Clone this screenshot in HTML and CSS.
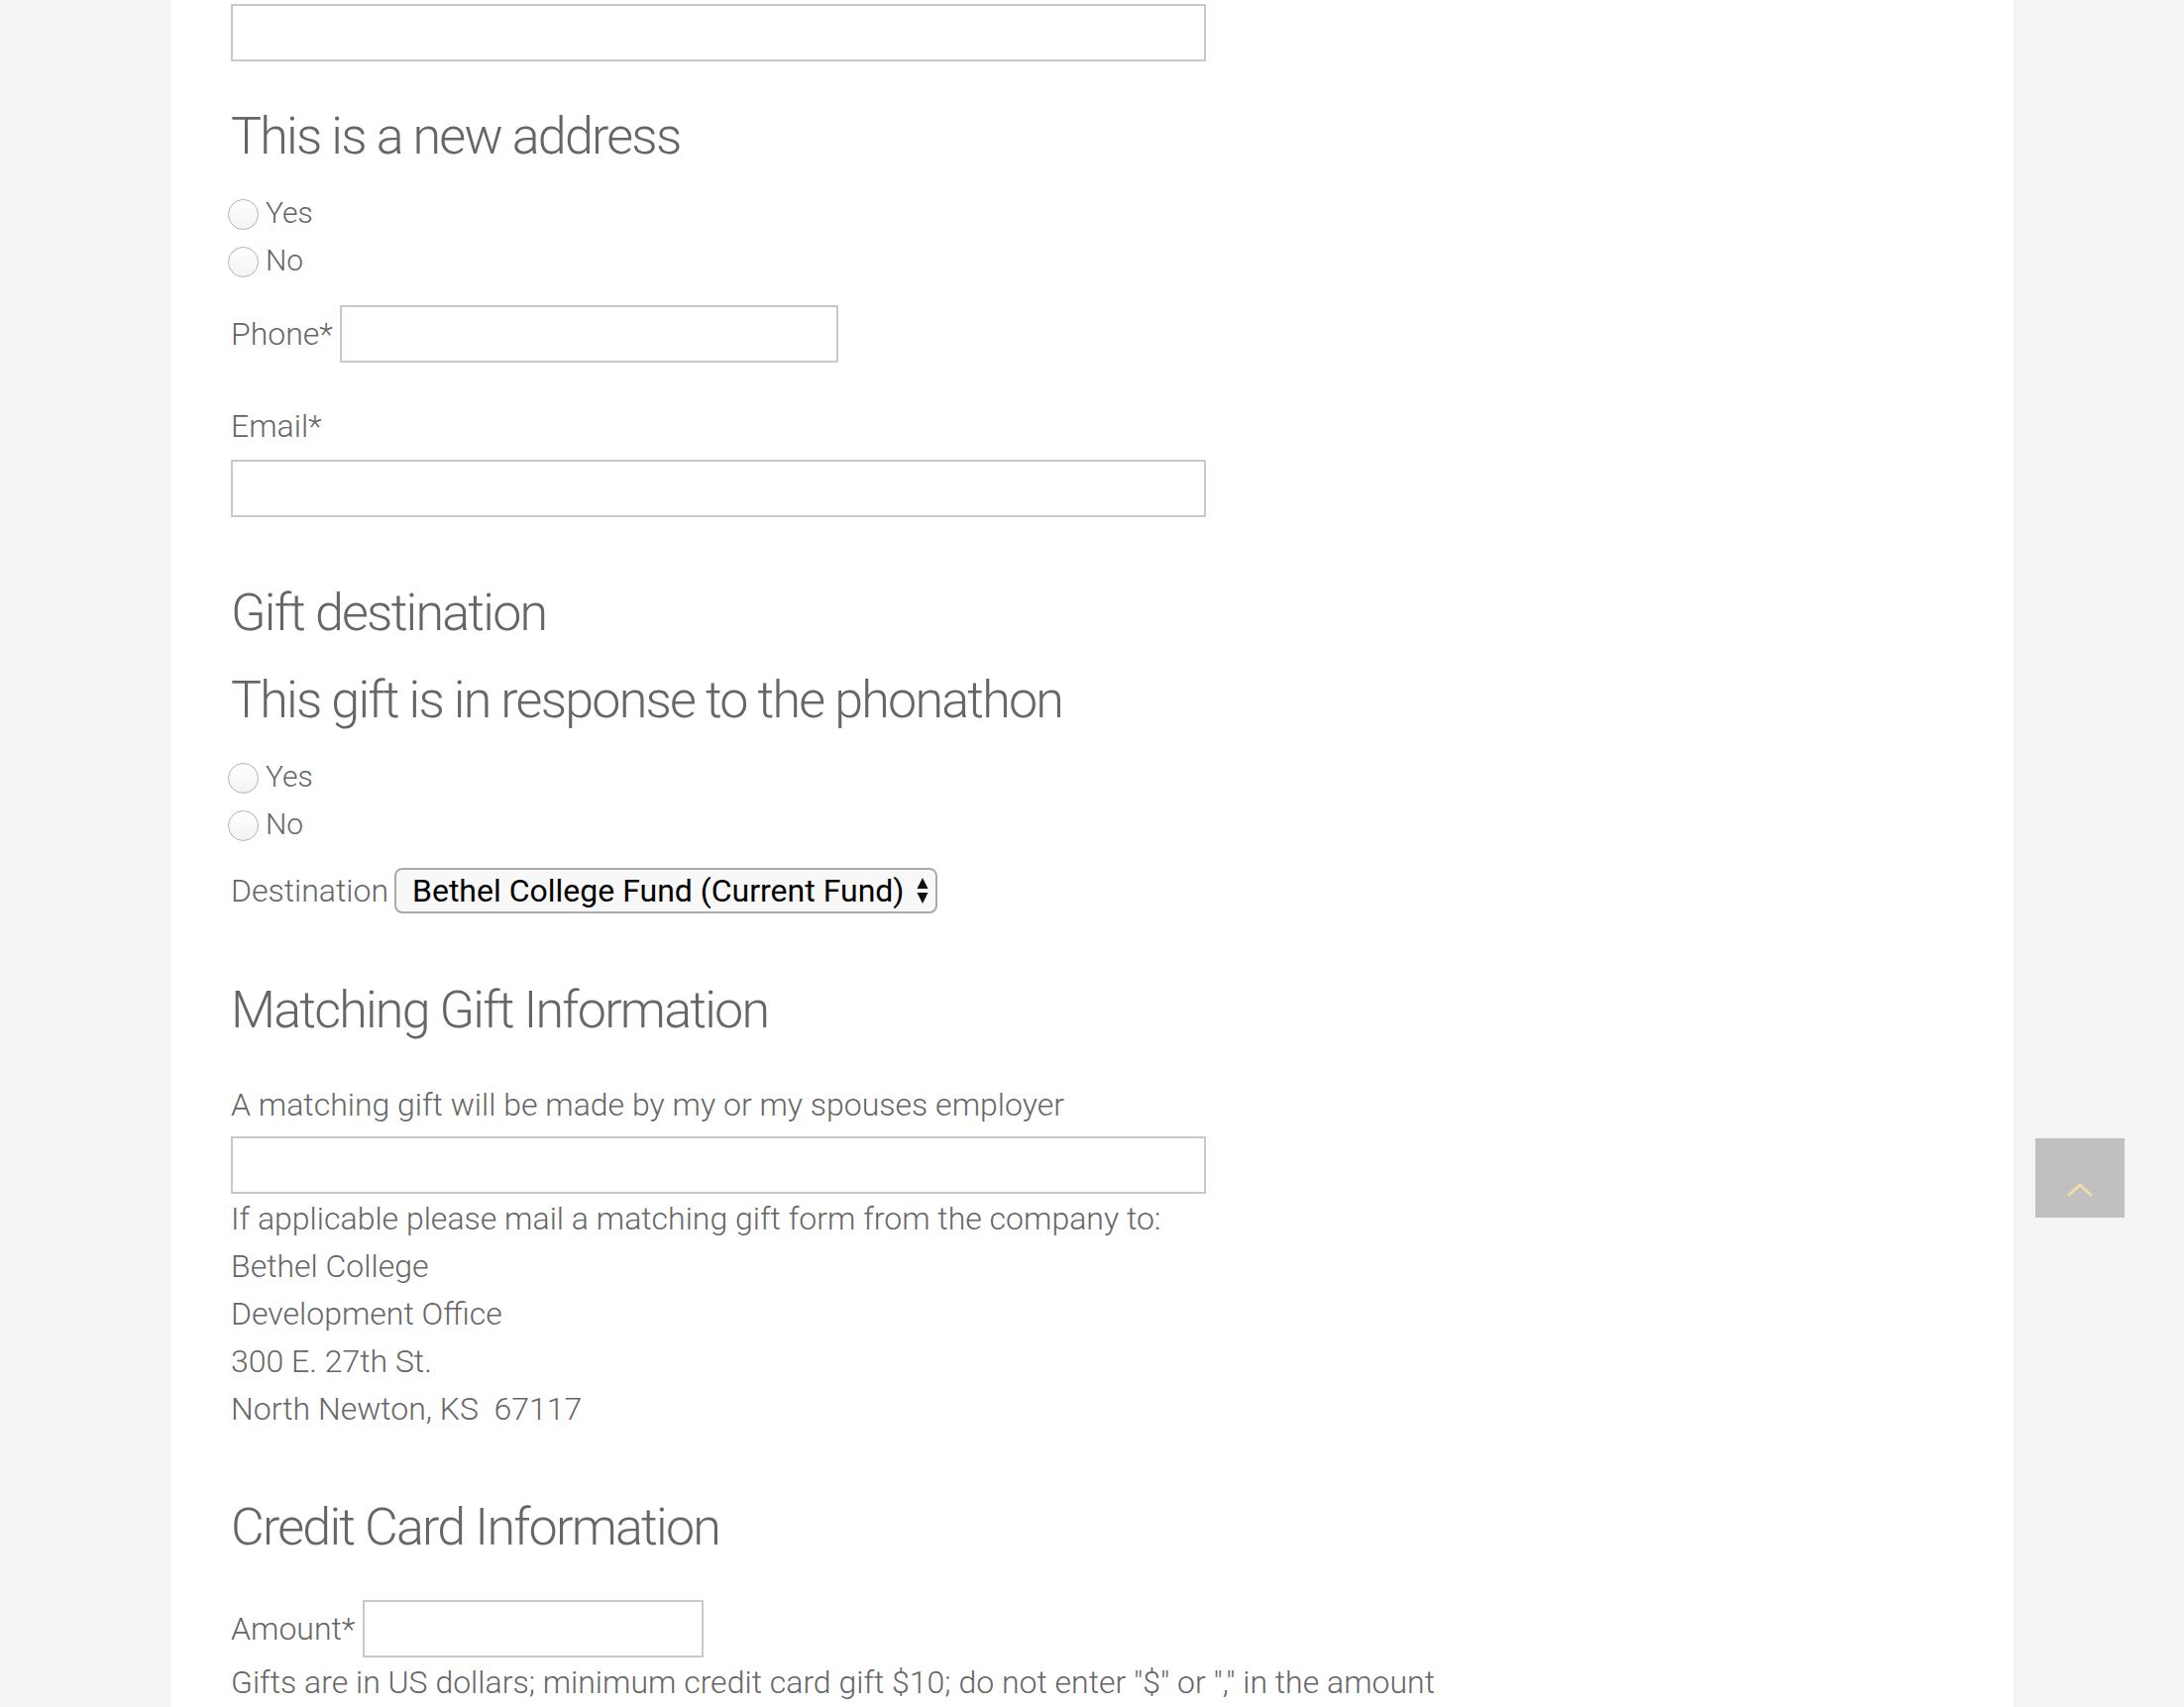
FILE: index.html
```html
<!DOCTYPE html>
<html>
<head>
    <title>Online Giving</title>
    <link rel="stylesheet" href="styles.css">
</head>
<body>
    <div class="page">
        <form class="gift-form">
            <input type="text" class="text-input wide" />

            <h3 class="section first">This is a new address</h3>
            <div class="choices">
                <label class="choice"><input type="radio" name="new-address" /> Yes</label>
                <label class="choice"><input type="radio" name="new-address" /> No</label>
            </div>

            <div class="inline-field">
                <label for="phone">Phone*</label>
                <input type="text" id="phone" class="text-input phone" />
            </div>

            <label class="block-label email-label" for="email">Email*</label>
            <input type="email" id="email" class="text-input wide" />

            <h3 class="section">Gift destination</h3>
            <h3 class="section">This gift is in response to the phonathon</h3>
            <div class="choices">
                <label class="choice"><input type="radio" name="phonathon" /> Yes</label>
                <label class="choice"><input type="radio" name="phonathon" /> No</label>
            </div>

            <div class="inline-field select-field">
                <label for="destination">Destination</label>
                <span class="select-wrap">
                    <select id="destination" class="select">
                        <option>Bethel College Fund (Current Fund)</option>
                    </select>
                    <svg class="select-arrows" width="12" height="28" viewBox="0 0 12 28">
                        <polygon points="6,1 11.5,12 0.5,12" fill="#111" />
                        <polygon points="0.5,16 11.5,16 6,27" fill="#111" />
                    </svg>
                </span>
            </div>

            <h3 class="section">Matching Gift Information</h3>
            <label class="block-label matching-label" for="employer">A matching gift will be made by my or my spouses employer</label>
            <input type="text" id="employer" class="text-input wide matching-input" />
            <div class="note">
                If applicable please mail a matching gift form from the company to:<br>
                Bethel College<br>
                Development Office<br>
                300 E. 27th St.<br>
                North Newton, KS&nbsp; 67117
            </div>

            <h3 class="section credit">Credit Card Information</h3>
            <div class="inline-field amount-field">
                <label for="amount">Amount*</label>
                <input type="text" id="amount" class="text-input amount" />
            </div>
            <div class="note">Gifts are in US dollars; minimum credit card gift $10; do not enter "$" or "," in the amount</div>
        </form>
    </div>

    <a href="#" class="back-to-top">
        <svg width="28" height="16" viewBox="0 0 28 16">
            <polyline points="2,14 14,3 26,14" fill="none" stroke="#f1dba6" stroke-width="3" />
        </svg>
    </a>
</body>
</html>
```

FILE: styles.css
```css
body {
    margin: 0;
    background: #f4f4f4;
    font-family: Roboto, "Liberation Sans", sans-serif;
    font-weight: 300;
    font-size: 32px;
    line-height: 48px;
    color: #666;
    overflow: hidden;
}
.page {
    margin-left: 172px;
    width: 1860px;
    min-height: 100vh;
    background: #fff;
    padding: 4px 0 0 61px;
    box-sizing: border-box;
}
.gift-form {
    display: flex;
    flex-direction: column;
    align-items: flex-start;
}
.text-input {
    height: 58px;
    box-sizing: border-box;
    border: 2px solid #c9c9c9;
    background: #fff;
    margin: 0;
    padding: 0 12px;
    font: inherit;
}
.wide {
    width: 984px;
}
.phone {
    width: 503px;
}
.amount {
    width: 344px;
}
.section {
    margin: 66px 0 0;
    font-size: 52px;
    line-height: 62px;
    font-weight: 300;
    letter-spacing: -1.8px;
    color: #666;
}
.section.first {
    margin-top: 45px;
}
.section + .section {
    margin-top: 26px;
}
.section.credit {
    margin-top: 65px;
}
.choices {
    margin-top: 22px;
    display: flex;
    flex-direction: column;
}
.choice {
    display: flex;
    align-items: center;
    height: 48px;
    font-size: 30px;
}
.choice input {
    appearance: none;
    width: 31px;
    height: 31px;
    margin: 2px 7px 0 -3px;
    border: 1px solid #b3b3b3;
    border-radius: 50%;
    background: linear-gradient(#fff, #f3f3f3);
}
.inline-field {
    display: flex;
    align-items: center;
    gap: 7px;
    margin-top: 21px;
}
.amount-field {
    margin-top: 42px;
    gap: 8px;
}
.block-label {
    display: block;
}
.email-label {
    margin-top: 40px;
    margin-bottom: 10px;
}
.matching-label {
    margin-top: 40px;
    margin-bottom: 8px;
}
.note {
    margin-top: 1px;
}
.select-field {
    gap: 6px;
    margin-top: 19px;
}
.select-wrap {
    position: relative;
    display: inline-block;
}
.select {
    appearance: none;
    width: 548px;
    height: 46px;
    margin: 0;
    padding: 0 20px 0 16px;
    border: 2px solid #a9a9a9;
    border-radius: 8px;
    background: #f8f8f8;
    font-family: Roboto, "Liberation Sans", sans-serif;
    font-weight: 400;
    font-size: 32px;
    color: #000;
    display: block;
}
.select-arrows {
    position: absolute;
    right: 9px;
    top: 9px;
    pointer-events: none;
}
.back-to-top {
    position: fixed;
    right: 60px;
    bottom: 494px;
    width: 90px;
    height: 80px;
    background: #c0c0c0;
    display: flex;
    justify-content: center;
    align-items: flex-end;
    padding-bottom: 20px;
    box-sizing: border-box;
}
```
